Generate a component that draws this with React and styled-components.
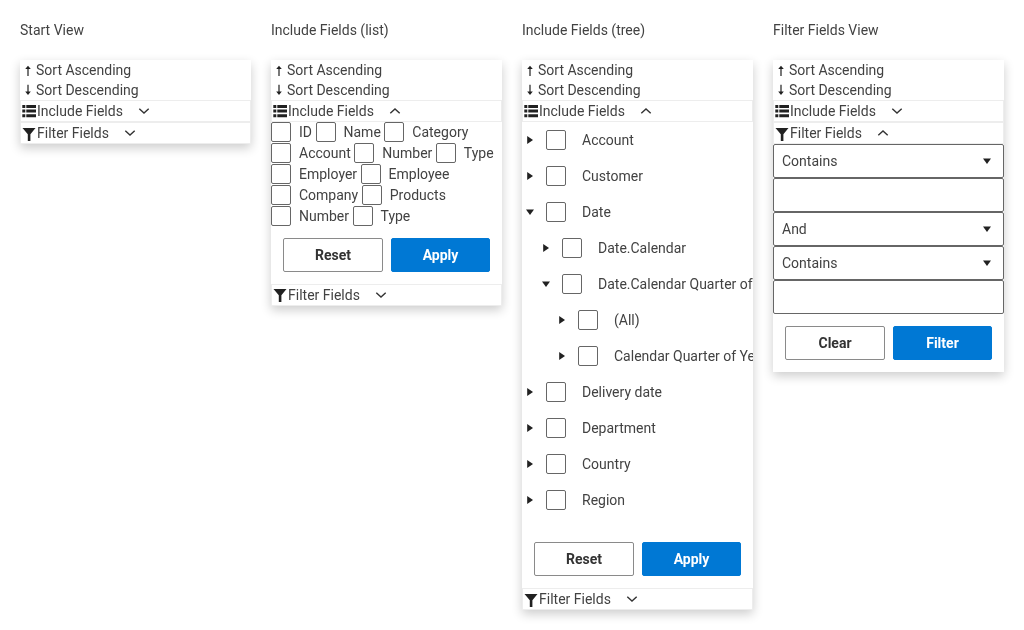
import React from "react";
import styled, { createGlobalStyle } from "styled-components";

const GlobalStyle = createGlobalStyle`
    html, body {
        margin: 0;
        padding: 0;
        background: #fff;
    }
    body {
        font-family: Roboto, "Liberation Sans", sans-serif;
        font-size: 14px;
        color: #424242;
    }
`

const ArrowUp = () => (
    <svg width="16" height="20" viewBox="0 0 16 20">
        <path d="M7.4 16V9H5.2L8 5.8 10.8 9H8.6v7z" fill="#212121" />
    </svg>
)

const ArrowDown = () => (
    <svg width="16" height="20" viewBox="0 0 16 20">
        <path d="M7.4 4.8v6.8H5.2L8 15l2.8-3.4H8.6V4.8z" fill="#212121" />
    </svg>
)

const ListIcon = () => (
    <svg width="16" height="20" viewBox="0 0 16 20">
        <path d="M1.3 4h3v3h-3zM5.3 4H15v3H5.3zM1.3 8.6h3v3h-3zM5.3 8.6H15v3H5.3zM1.3 13.3h3v3h-3zM5.3 13.3H15v3H5.3z" fill="#212121" />
    </svg>
)

const FunnelIcon = () => (
    <svg width="16" height="21" viewBox="0 0 16 21">
        <path d="M1.5 5h13L9.4 11.2V18H6.8v-6.8z" fill="#212121" />
    </svg>
)

const Chevron = ({ open }) => (
    <ChevronSvg width="12" height="8" viewBox="0 0 12 8">
        <path d={open ? "M1.3 6.3L6 2l4.7 4.3" : "M1.3 1.7L6 6l4.7-4.3"} fill="none" stroke="#333" strokeWidth="1.4" />
    </ChevronSvg>
)

const Caret = ({ dir }) => (
    <CaretSvg width="10" height="10" viewBox="0 0 10 10">
        <path d={dir === "down" ? "M1 2.5h8L5 8z" : "M2.2 1v8L8 5z"} fill="#212121" />
    </CaretSvg>
)

const Section = ({ icon, title, open, children }) => (
    <>
        <SectionHead>
            {icon}
            <HeadLabel>{title}</HeadLabel>
            <HeadChevron>
                <Chevron open={open} />
            </HeadChevron>
        </SectionHead>
        {children}
    </>
)

const SortItems = () => (
    <>
        <SortRow><ArrowUp />Sort Ascending</SortRow>
        <SortRow><ArrowDown />Sort Descending</SortRow>
    </>
)

const IncludeSection = ({ open, children }) => (
    <Section icon={<ListIcon />} title="Include Fields" open={open}>{children}</Section>
)

const FilterSection = ({ open, children }) => (
    <Section icon={<FunnelIcon />} title="Filter Fields" open={open}>{children}</Section>
)

const listFields = ["ID", "Name", "Category", "Account", "Number", "Type", "Employer", "Employee", "Company", "Products", "Number", "Type"]

const treeFields = [
    { label: "Account", level: 0 },
    { label: "Customer", level: 0 },
    { label: "Date", level: 0, open: true },
    { label: "Date.Calendar", level: 1 },
    { label: "Date.Calendar Quarter of Year", level: 1, open: true },
    { label: "(All)", level: 2 },
    { label: "Calendar Quarter of Year", level: 2 },
    { label: "Delivery date", level: 0 },
    { label: "Department", level: 0 },
    { label: "Country", level: 0 },
    { label: "Region", level: 0 },
]

const App = () => {
    return (
        <Page>
            <GlobalStyle />
            <Column>
                <Title>Start View</Title>
                <Menu>
                    <SortItems />
                    <IncludeSection />
                    <FilterSection />
                </Menu>
            </Column>

            <Column>
                <Title>Include Fields (list)</Title>
                <Menu>
                    <SortItems />
                    <IncludeSection open>
                        <FieldList>
                            {listFields.map((f, i) => (
                                <ListField key={i}>
                                    <Check />
                                    <span>{f}</span>
                                </ListField>
                            ))}
                        </FieldList>
                        <Actions>
                            <Button>Reset</Button>
                            <Button $primary>Apply</Button>
                        </Actions>
                    </IncludeSection>
                    <FilterSection />
                </Menu>
            </Column>

            <Column>
                <Title>Include Fields (tree)</Title>
                <Menu>
                    <SortItems />
                    <IncludeSection open>
                        <Tree>
                            {treeFields.map((f, i) => (
                                <TreeRow key={i} $level={f.level}>
                                    <Caret dir={f.open ? "down" : "right"} />
                                    <TreeCheck />
                                    <TreeLabel>{f.label}</TreeLabel>
                                </TreeRow>
                            ))}
                        </Tree>
                        <Actions $tree>
                            <Button>Reset</Button>
                            <Button $primary>Apply</Button>
                        </Actions>
                    </IncludeSection>
                    <FilterSection />
                </Menu>
            </Column>

            <Column>
                <Title>Filter Fields View</Title>
                <Menu>
                    <SortItems />
                    <IncludeSection />
                    <FilterSection open>
                        <Select>Contains<Caret dir="down" /></Select>
                        <TextBox />
                        <Select>And<Caret dir="down" /></Select>
                        <Select>Contains<Caret dir="down" /></Select>
                        <TextBox />
                        <Actions>
                            <Button>Clear</Button>
                            <Button $primary>Filter</Button>
                        </Actions>
                    </FilterSection>
                </Menu>
            </Column>
        </Page>
    );
}

const Page = styled.div`
    display: flex;
    align-items: flex-start;
    gap: 20px;
    padding: 20px;
    width: 1024px;
    height: 630px;
    box-sizing: border-box;
    overflow: hidden;
    will-change: transform;
`

const Column = styled.div`
    width: 231px;
    flex: none;
`

const Title = styled.div`
    height: 40px;
    line-height: 20px;
`

const Menu = styled.div`
    background: #fff;
    box-shadow: 0 4px 10px rgba(0, 0, 0, 0.2);
    overflow: hidden;
`

const SortRow = styled.div`
    display: flex;
    align-items: center;
    height: 20px;
    line-height: 20px;
`

const SectionHead = styled.div`
    display: flex;
    align-items: center;
    height: 20px;
    border: 1px solid #ededed;
`

const HeadLabel = styled.span`
    line-height: 20px;
`

const HeadChevron = styled.span`
    display: inline-flex;
    margin-left: 15px;
`

const ChevronSvg = styled.svg`
    display: block;
`

const CaretSvg = styled.svg`
    flex: none;
`

const Check = styled.span`
    display: block;
    flex: none;
    width: 20px;
    height: 20px;
    box-sizing: border-box;
    border: 1px solid #666;
    border-radius: 2px;
`

const TreeCheck = styled(Check)`
    margin-left: 11px;
`

const FieldList = styled.div`
    display: flex;
    flex-wrap: wrap;
    column-gap: 3.5px;
`

const ListField = styled.label`
    display: flex;
    align-items: center;
    height: 20.8px;
    gap: 8px;
`

const Actions = styled.div`
    display: flex;
    gap: 8px;
    padding: ${p => (p.$tree ? "24px 12px 12px" : "12px")};
`

const Button = styled.button`
    width: ${p => (p.$primary ? "99px" : "100px")};
    height: 34px;
    padding: 0;
    box-sizing: border-box;
    border: 1px solid ${p => (p.$primary ? "#0078d4" : "#8a8a8a")};
    border-radius: 2px;
    background: ${p => (p.$primary ? "#0078d4" : "#fff")};
    color: ${p => (p.$primary ? "#fff" : "#333")};
    font-family: Roboto, sans-serif;
    font-size: 14px;
    font-weight: 700;
`

const Tree = styled.div`
    white-space: nowrap;
    overflow: hidden;
`

const TreeRow = styled.div`
    display: flex;
    align-items: center;
    height: 36px;
    padding-left: ${p => 3 + p.$level * 16}px;
`

const TreeLabel = styled.span`
    margin-left: 16px;
`

const Select = styled.div`
    display: flex;
    align-items: center;
    justify-content: space-between;
    height: 34px;
    padding: 0 11px 0 8px;
    box-sizing: border-box;
    border: 1px solid #666;
    border-radius: 2px;
`

const TextBox = styled.div`
    height: 34px;
    box-sizing: border-box;
    border: 1px solid #666;
    border-radius: 2px;
`

export default App;
